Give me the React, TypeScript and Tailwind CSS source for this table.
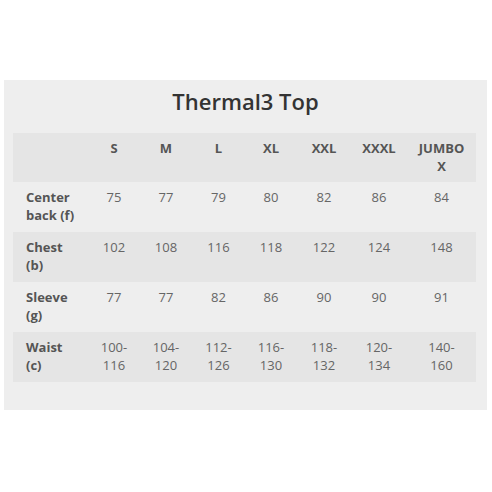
import React from "react";

const sizes = ["S", "M", "L", "XL", "XXL", "XXXL", "JUMBO X"];
const rows: { label: string; vals: string[] }[] = [
  { label: "Center back (f)", vals: ["75", "77", "79", "80", "82", "86", "84"] },
  { label: "Chest (b)", vals: ["102", "108", "116", "118", "122", "124", "148"] },
  { label: "Sleeve (g)", vals: ["77", "77", "82", "86", "90", "90", "91"] },
  { label: "Waist (c)", vals: ["100-116", "104-120", "112-126", "116-130", "118-132", "120-134", "140-160"] },
];
const widths = [75, 52, 52, 53, 52, 54, 56, 69];

export default function App() {
  return (
    <div className="w-[492px] h-[492px] bg-white pt-[80px]" style={{ fontFamily: '"Open Sans", sans-serif' }}>
      <div className="ml-[4px] w-[483px] h-[330px] bg-[#eeeeee] pt-[6px]">
        <h2 className="text-center text-[22px] leading-[30px] font-semibold text-[#333333] mb-[17px]">Thermal3 Top</h2>
        <table className="ml-[9px] w-[463px] table-fixed border-collapse text-[13px] leading-[18px]">
          <colgroup>
            {widths.map((w, i) => (
              <col key={i} style={{ width: w }} />
            ))}
          </colgroup>
          <thead>
            <tr className="bg-[#e5e5e5] h-[49px] align-top">
              <th className="pt-[6px] pb-[7px]"></th>
              {sizes.map((s) => (
                <th key={s} className="pt-[6px] pb-[7px] px-[10px] text-center font-bold text-[#555555]">
                  {s}
                </th>
              ))}
            </tr>
          </thead>
          <tbody>
            {rows.map((r, i) => (
              <tr key={r.label} className={`h-[50px] align-top ${i % 2 === 1 ? "bg-[#e5e5e5]" : ""}`}>
                <td className="pt-[6px] pb-[8px] pl-[13px] pr-[12px] text-left font-bold text-[#555555]">{r.label}</td>
                {r.vals.map((v, j) => (
                  <td key={j} className="pt-[6px] pb-[8px] px-[6px] text-center text-[#666666]">
                    {v.includes("-") ? (
                      <>
                        {v.split("-")[0]}-
                        <br />
                        {v.split("-")[1]}
                      </>
                    ) : (
                      v
                    )}
                  </td>
                ))}
              </tr>
            ))}
          </tbody>
        </table>
      </div>
    </div>
  );
}
